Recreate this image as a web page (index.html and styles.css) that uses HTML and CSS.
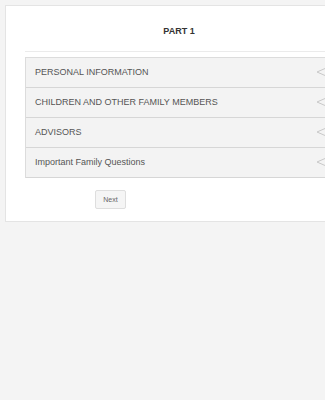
FILE: index.html
```html
<!DOCTYPE html>
<html lang="en">
<head>
    <meta charset="UTF-8">
    <meta name="viewport" content="width=device-width, initial-scale=1.0">
    <title>Part 1</title>
    <link rel="stylesheet" href="styles.css">
</head>
<body>
    <div class="card">
        <h2 class="part-title">PART 1</h2>
        <div class="sections">
            <div class="section">
                <span>PERSONAL INFORMATION</span>
                <svg class="caret" width="10" height="8" viewBox="0 0 10 8"><polyline points="9,0.5 1,4 9,7.5" fill="none" stroke="#c8c8c8" stroke-width="1"/></svg>
            </div>
            <div class="section">
                <span>CHILDREN AND OTHER FAMILY MEMBERS</span>
                <svg class="caret" width="10" height="8" viewBox="0 0 10 8"><polyline points="9,0.5 1,4 9,7.5" fill="none" stroke="#c8c8c8" stroke-width="1"/></svg>
            </div>
            <div class="section">
                <span>ADVISORS</span>
                <svg class="caret" width="10" height="8" viewBox="0 0 10 8"><polyline points="9,0.5 1,4 9,7.5" fill="none" stroke="#c8c8c8" stroke-width="1"/></svg>
            </div>
            <div class="section">
                <span>Important Family Questions</span>
                <svg class="caret" width="10" height="8" viewBox="0 0 10 8"><polyline points="9,0.5 1,4 9,7.5" fill="none" stroke="#c8c8c8" stroke-width="1"/></svg>
            </div>
        </div>
        <button class="next-btn">Next</button>
    </div>
</body>
</html>
```

FILE: styles.css
```css
body {
    margin: 0;
    background-color: #f4f4f4;
    font-family: 'Liberation Sans', Arial, sans-serif;
    color: #555;
}
.card {
    width: 308px;
    margin: 5px 0 0 5px;
    padding: 18px 19px 12px;
    background-color: #fff;
    border: 1px solid #e4e4e4;
}
.part-title {
    margin: 0;
    font-size: 9px;
    line-height: 14px;
    font-weight: bold;
    color: #333;
    text-align: center;
    padding-bottom: 13px;
    border-bottom: 1px solid #ebebeb;
    margin-bottom: 5px;
}
.sections {
    border: 1px solid #dcdcdc;
    border-bottom: none;
}
.section {
    display: flex;
    align-items: center;
    justify-content: space-between;
    height: 29px;
    padding: 0 6px 2px 9px;
    box-sizing: border-box;
    height: 30px;
    background-color: #f3f3f3;
    border-bottom: 1px solid #d6d6d6;
    font-size: 9px;
}
.caret {
    display: block;
}
.next-btn {
    display: block;
    margin: 12px 0 0 70px;
    width: 31px;
    height: 19px;
    padding: 0;
    font-family: 'Liberation Sans', Arial, sans-serif;
    font-size: 7px;
    color: #666;
    background-color: #f5f5f5;
    border: 1px solid #dedede;
    border-radius: 2px;
}
```
